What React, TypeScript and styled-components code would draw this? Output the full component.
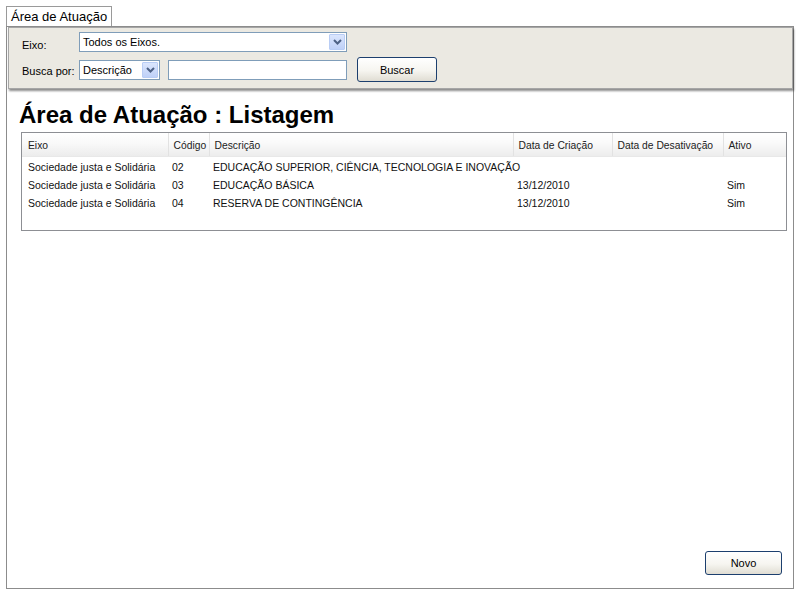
import React from "react";
import styled, { createGlobalStyle } from "styled-components";

const Global = createGlobalStyle`
  html, body { margin: 0; padding: 0; background: #fff; }
  body { font-family: "Liberation Sans", Arial, sans-serif; color: #000; }
`;

const Page = styled.div`
  padding: 6px 6px 0 6px;
  width: 788px;
  display: flex;
  flex-direction: column;
`;

const Tab = styled.div`
  align-self: flex-start;
  height: 19px;
  padding: 0 4px 0 4px;
  border: 1px solid #9a9a9a;
  border-bottom: none;
  font-size: 13px;
  line-height: 20px;
  background: #fff;
`;

const Frame = styled.div`
  height: 561px;
  border: 1px solid #8c8c8c;
  display: flex;
  flex-direction: column;
`;

const FilterPanel = styled.div`
  box-sizing: border-box;
  margin: 0 0 0 1px;
  height: 62px;
  background: #ebe9e2;
  border: 1px solid #a6a6a6;
  box-shadow: 1px 2px 2px rgba(0, 0, 0, 0.45);
  padding: 4px 0 0 13px;
  display: grid;
  grid-template-columns: 57px auto;
  grid-template-rows: 20px 25px;
  row-gap: 5px;
  align-items: center;
`;

const Label = styled.div<{ $dy: number }>`
  font-size: 11px;
  padding-top: ${(p) => p.$dy}px;
`;

const Controls = styled.div`
  display: flex;
  align-items: center;
  gap: 8px;
`;

const SelectBox = styled.div<{ $w: number }>`
  width: ${(p) => p.$w}px;
  height: 18px;
  border: 1px solid #7f9db9;
  background: #fff;
  display: flex;
  align-items: center;
  box-sizing: content-box;
`;

const SelectText = styled.div`
  flex: 1;
  font-size: 11px;
  padding-left: 3px;
  white-space: nowrap;
`;

const ArrowBtn = styled.div`
  width: 16px;
  height: 16px;
  margin-right: 1px;
  border: 1px solid #b9cdf5;
  border-radius: 1px;
  background: linear-gradient(#dbe6fd, #bfd1f8);
  display: flex;
  align-items: center;
  justify-content: center;
  box-sizing: border-box;
`;

const TextInput = styled.div`
  width: 177px;
  height: 18px;
  border: 1px solid #7f9db9;
  background: #fff;
`;

const Button = styled.button<{ $w: number; $h: number }>`
  width: ${(p) => p.$w}px;
  height: ${(p) => p.$h}px;
  border: 1px solid #1c3f6e;
  border-radius: 3px;
  background: linear-gradient(#ffffff 0%, #f6f5f0 55%, #e0ddd3 100%);
  font-family: "Liberation Sans", Arial, sans-serif;
  font-size: 11px;
  color: #000;
  padding: 0;
  cursor: pointer;
`;

const SearchButton = styled(Button)`
  margin-left: 2px;
`;

const Heading = styled.h1`
  margin: 12px 0 0 12px;
  font-size: 24px;
  line-height: 28px;
  font-weight: bold;
`;

const TableWrap = styled.div`
  margin: 3px 6px 0 14px;
  height: 97px;
  border: 1px solid #8d8f94;
`;

const Table = styled.table`
  width: 100%;
  border-collapse: collapse;
  table-layout: fixed;
`;

const Col = styled.col<{ $w: number }>`
  width: ${(p) => p.$w}px;
`;

const Th = styled.th`
  box-sizing: border-box;
  height: 23px;
  padding: 3px 0 0 5px;
  text-align: left;
  font-weight: normal;
  font-size: 10.3px;
  color: #222;
  background: linear-gradient(#ffffff 0%, #f9f9f9 45%, #ececec 100%);
  border-right: 1px solid #e2e2e2;
  border-bottom: 1px solid #e8e8e8;
  white-space: nowrap;
  &:first-child { padding-left: 6px; }
  &:last-child { border-right: none; }
`;

const Td = styled.td`
  height: 18px;
  padding: 0 0 0 4px;
  font-size: 10.5px;
  white-space: nowrap;
  overflow: visible;
  color: #111;
  &:first-child { padding-left: 6px; }
`;

const FirstRowSpacer = styled.tr`
  height: 2px;
`;

const Footer = styled.div`
  margin-top: auto;
  display: flex;
  justify-content: flex-end;
  padding: 0 11px 13px 0;
`;

const Arrow = () => (
  <svg width="9" height="6" viewBox="0 0 9 6">
    <path d="M1 1 L4.5 4.5 L8 1" fill="none" stroke="#4d6185" strokeWidth="2" />
  </svg>
);

const rows = [
  { eixo: "Sociedade justa e Solidária", cod: "02", desc: "EDUCAÇÃO SUPERIOR, CIÊNCIA, TECNOLOGIA E INOVAÇÃO", cri: "", des: "", at: "" },
  { eixo: "Sociedade justa e Solidária", cod: "03", desc: "EDUCAÇÃO BÁSICA", cri: "13/12/2010", des: "", at: "Sim" },
  { eixo: "Sociedade justa e Solidária", cod: "04", desc: "RESERVA DE CONTINGÊNCIA", cri: "13/12/2010", des: "", at: "Sim" },
];

const widths = [146, 41, 304, 99, 111, 63];

export default function App() {
  return (
    <>
      <Global />
      <Page>
        <Tab>Área de Atuação</Tab>
        <Frame>
          <FilterPanel>
            <Label $dy={5}>Eixo:</Label>
            <Controls>
              <SelectBox $w={266}>
                <SelectText>Todos os Eixos.</SelectText>
                <ArrowBtn><Arrow /></ArrowBtn>
              </SelectBox>
            </Controls>
            <Label $dy={2}>Busca por:</Label>
            <Controls>
              <SelectBox $w={79}>
                <SelectText>Descrição</SelectText>
                <ArrowBtn><Arrow /></ArrowBtn>
              </SelectBox>
              <TextInput />
              <SearchButton $w={80} $h={25}>Buscar</SearchButton>
            </Controls>
          </FilterPanel>
          <Heading>Área de Atuação : Listagem</Heading>
          <TableWrap>
            <Table>
              <colgroup>
                {widths.map((w, i) => (
                  <Col key={i} $w={w} />
                ))}
              </colgroup>
              <thead>
                <tr>
                  <Th>Eixo</Th>
                  <Th>Código</Th>
                  <Th>Descrição</Th>
                  <Th>Data de Criação</Th>
                  <Th>Data de Desativação</Th>
                  <Th>Ativo</Th>
                </tr>
              </thead>
              <tbody>
                <FirstRowSpacer />
                {rows.map((r) => (
                  <tr key={r.cod}>
                    <Td>{r.eixo}</Td>
                    <Td>{r.cod}</Td>
                    <Td>{r.desc}</Td>
                    <Td>{r.cri}</Td>
                    <Td>{r.des}</Td>
                    <Td>{r.at}</Td>
                  </tr>
                ))}
              </tbody>
            </Table>
          </TableWrap>
          <Footer>
            <Button $w={77} $h={24}>Novo</Button>
          </Footer>
        </Frame>
      </Page>
    </>
  );
}
